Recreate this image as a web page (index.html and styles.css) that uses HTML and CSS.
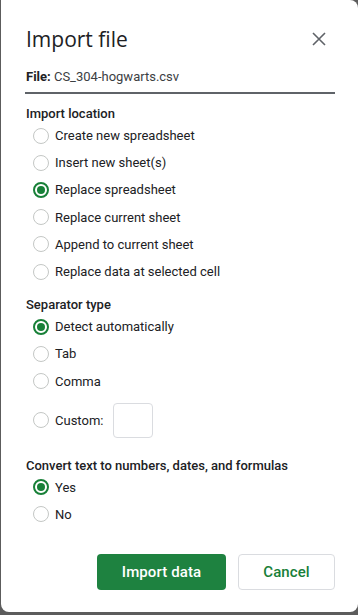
FILE: index.html
```html
<!DOCTYPE html>
<html>
<head>
<meta charset="utf-8">
<link rel="stylesheet" href="styles.css">
</head>
<body>
<div class="dialog">
  <div class="header">
    <div class="title">Import file</div>
    <svg class="close" width="14" height="14" viewBox="0 0 14 14"><path d="M1 1L13 13M13 1L1 13" stroke="#5f6368" stroke-width="1.6" fill="none"/></svg>
  </div>
  <div class="file"><b>File:</b> CS_304-hogwarts.csv</div>

  <div class="section first">
    <div class="heading">Import location</div>
    <div class="row"><span class="radio"></span><span>Create new spreadsheet</span></div>
    <div class="row"><span class="radio"></span><span>Insert new sheet(s)</span></div>
    <div class="row"><span class="radio checked"></span><span>Replace spreadsheet</span></div>
    <div class="row"><span class="radio"></span><span>Replace current sheet</span></div>
    <div class="row"><span class="radio"></span><span>Append to current sheet</span></div>
    <div class="row"><span class="radio"></span><span>Replace data at selected cell</span></div>
  </div>

  <div class="section">
    <div class="heading">Separator type</div>
    <div class="row"><span class="radio checked"></span><span>Detect automatically</span></div>
    <div class="row"><span class="radio"></span><span>Tab</span></div>
    <div class="row"><span class="radio"></span><span>Comma</span></div>
    <div class="row custom"><span class="radio"></span><span>Custom:</span><span class="box"></span></div>
  </div>

  <div class="section last">
    <div class="heading">Convert text to numbers, dates, and formulas</div>
    <div class="row"><span class="radio checked"></span><span>Yes</span></div>
    <div class="row"><span class="radio"></span><span>No</span></div>
  </div>

  <div class="actions">
    <button class="btn primary">Import data</button>
    <button class="btn secondary">Cancel</button>
  </div>
</div>
</body>
</html>
```

FILE: styles.css
```css
html, body {
  margin: 0;
  padding: 0;
}
body {
  background: #5c5c5c;
  width: 358px;
  height: 615px;
  overflow: hidden;
  font-family: Roboto, "Liberation Sans", Arial, sans-serif;
  color: #202124;
}
.dialog {
  margin-left: 1px;
  width: 357px;
  height: 612px;
  box-sizing: border-box;
  background: #fff;
  border-radius: 0 8px 8px 8px;
  padding: 25px 23px 0 24px;
}
.header {
  display: flex;
  align-items: center;
  justify-content: space-between;
  height: 28px;
}
.title {
  font-family: "Open Sans", Roboto, sans-serif;
  font-size: 21px;
  line-height: 28px;
  color: #202124;
  padding-left: 1px;
}
.close {
  margin-right: 9px;
}
.file {
  margin-top: 14px;
  font-size: 13px;
  line-height: 20px;
  padding: 0 0 5px 1px;
  border-bottom: 2px solid #5f6368;
  color: #3c4043;
}
.file b {
  font-weight: 700;
  color: #202124;
}
.section {
  margin-top: 12px;
  padding-left: 1px;
}
.section.first {
  margin-top: 12px;
}
.section.last {
  margin-top: 11px;
}
.heading {
  font-size: 13px;
  font-weight: 500;
  line-height: 16px;
  color: #202124;
}
.row {
  display: flex;
  align-items: center;
  height: 27.2px;
  font-size: 13px;
  color: #202124;
  padding-left: 7px;
}
.radio {
  width: 16px;
  height: 16px;
  box-sizing: border-box;
  border: 1px solid #c4c7c5;
  border-radius: 50%;
  margin-right: 6px;
  flex: none;
  position: relative;
}
.radio.checked {
  border: 2px solid #188038;
}
.radio.checked::after {
  content: "";
  position: absolute;
  left: 2px;
  top: 2px;
  width: 8px;
  height: 8px;
  border-radius: 50%;
  background: #188038;
}
.row.custom {
  height: auto;
  padding-top: 8px;
  padding-bottom: 9px;
}
.box {
  width: 40px;
  height: 35px;
  box-sizing: border-box;
  border: 1px solid #dadce0;
  border-radius: 4px;
  margin-left: 10px;
}
.actions {
  margin-top: 26px;
  display: flex;
  justify-content: flex-end;
  gap: 12px;
}
.btn {
  height: 36px;
  border-radius: 4px;
  font-family: Roboto, "Liberation Sans", Arial, sans-serif;
  font-size: 15px;
  font-weight: 500;
  letter-spacing: 0.1px;
  cursor: pointer;
}
.primary {
  width: 129px;
  background: #1e8240;
  color: #fff;
  border: none;
}
.secondary {
  width: 97px;
  background: #fff;
  color: #188038;
  border: 1px solid #dadce0;
}
```
